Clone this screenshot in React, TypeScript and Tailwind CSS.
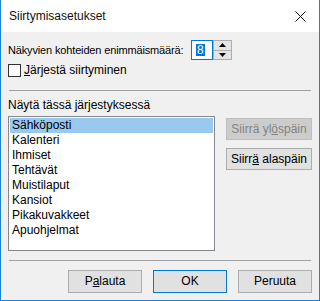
import React from "react";

const items = [
  "Sähköposti",
  "Kalenteri",
  "Ihmiset",
  "Tehtävät",
  "Muistilaput",
  "Kansiot",
  "Pikakuvakkeet",
  "Apuohjelmat",
];

export default function App() {
  return (
    <div
      className="w-[320px] h-[301px] flex flex-col border-l border-r border-b border-[#1883d7] bg-[#f0f0f0] text-[12px] text-black leading-[15px] whitespace-nowrap"
      style={{ fontFamily: '"Liberation Sans", Arial, sans-serif' }}
    >
      {/* title bar */}
      <div className="h-[32px] bg-white flex items-center pl-[8px] pr-[11px] shrink-0">
        <span className="flex-1 text-[12px] text-[#111]">Siirtymisasetukset</span>
        <svg width="11" height="11" viewBox="0 0 11 11" className="mr-[2px]">
          <path d="M0.5 0.5 L10.5 10.5 M10.5 0.5 L0.5 10.5" stroke="#111" strokeWidth="1" />
        </svg>
      </div>

      <div className="flex-1 flex flex-col px-[7px]">
        {/* row 1 */}
        <div className="mt-[8px] h-[20px] flex items-center">
          <span className="w-[183px] shrink-0 text-[11px] tracking-[-0.15px]">
            Näkyvien kohteiden enimmäismäärä:
          </span>
          <div className="flex h-[20px]">
            <div className="w-[22px] h-[20px] border border-[#0078d7] bg-white flex items-center pl-[4px]">
              <span className="bg-[#0078d7] text-white px-[1px] leading-[12px]">8</span>
            </div>
            <div className="w-[19px] h-[20px] border border-[#adadad] bg-[#e5e5e5] flex flex-col">
              <div className="flex-1 flex items-center justify-center border-b border-[#adadad]">
                <svg width="7" height="4" viewBox="0 0 7 4">
                  <path d="M0 4 L3.5 0 L7 4 Z" fill="#000" />
                </svg>
              </div>
              <div className="flex-1 flex items-center justify-center">
                <svg width="7" height="4" viewBox="0 0 7 4">
                  <path d="M0 0 L3.5 4 L7 0 Z" fill="#000" />
                </svg>
              </div>
            </div>
          </div>
        </div>

        {/* row 2 */}
        <div className="mt-[3px] h-[14px] flex items-center">
          <div className="w-[13px] h-[13px] border border-[#333] bg-white shrink-0" />
          <span className="ml-[3px]">
            <span className="underline">J</span>ärjestä siirtyminen
          </span>
        </div>

        {/* separator */}
        <div className="mt-[13px] h-[1px] mx-[1px] bg-[#a0a0a0]" />

        <div className="mt-[7px] h-[15px]">Näytä tässä järjestyksessä</div>

        <div className="mt-[3px] flex">
          <div className="w-[208px] h-[135px] border border-[#828790] bg-white p-[1px] flex flex-col">
            {items.map((it, i) => (
              <div
                key={it}
                className={
                  "h-[15px] pl-[2px] leading-[15px] " + (i === 0 ? "bg-[#99c9ef]" : "")
                }
              >
                {it}
              </div>
            ))}
          </div>
          <div className="ml-[11px] mt-[2px] flex flex-col gap-[8px]">
            <div className="w-[86px] h-[22px] border border-[#bfbfbf] bg-[#cccccc] text-[#838383] flex items-center justify-center">
              <span>
                Siirrä yl<span className="underline">ö</span>späin
              </span>
            </div>
            <div className="w-[86px] h-[22px] border border-[#adadad] bg-[#e1e1e1] flex items-center justify-center">
              <span>
                Siirr<span className="underline">ä</span> alaspäin
              </span>
            </div>
          </div>
        </div>

        {/* separator */}
        <div className="mt-[9px] h-[1px] mx-[1px] bg-[#a0a0a0]" />

        <div className="mt-[9px] flex justify-end gap-[11px]">
          <div className="w-[74px] h-[23px] border border-[#adadad] bg-[#e1e1e1] flex items-center justify-center">
            <span>
              P<span className="underline">a</span>lauta
            </span>
          </div>
          <div className="w-[74px] h-[23px] border border-[#0078d7] bg-[#e1e1e1] flex items-center justify-center">
            OK
          </div>
          <div className="w-[74px] h-[23px] border border-[#adadad] bg-[#e1e1e1] flex items-center justify-center">
            Peruuta
          </div>
        </div>
      </div>
    </div>
  );
}
